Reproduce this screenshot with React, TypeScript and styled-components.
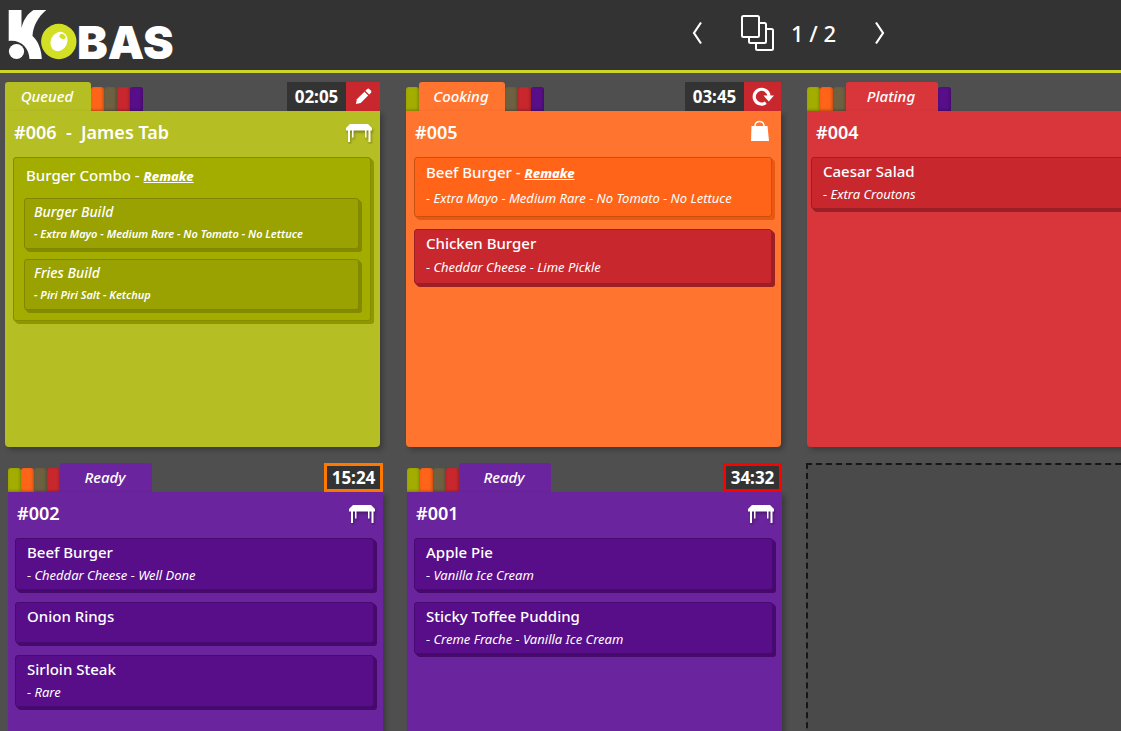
import React from 'react';
import styled, { createGlobalStyle, css } from 'styled-components';

const GlobalStyle = createGlobalStyle`
  *, *::before, *::after { box-sizing: border-box; }
  body { margin: 0; background: #4f4f4f; }
  h2, h3, p, ul { margin: 0; padding: 0; }
  ul { list-style: none; }
  button { font: inherit; color: inherit; border: 0; margin: 0; cursor: pointer; }
`;

type StageId = 'queued' | 'cooking' | 'held' | 'plating' | 'ready';
type Tone = 'green' | 'orange' | 'red' | 'purple';
type Size = 'compact' | 'medium' | 'tall' | 'group';

const stageColours: Record<StageId, string> = {
  queued: '#a3ad00',
  cooking: '#ff6418',
  held: '#6e6141',
  plating: '#c8282d',
  ready: '#570e88',
};

const stageOrder: StageId[] = ['queued', 'cooking', 'held', 'plating', 'ready'];

const cardColours: Record<StageId, string> = {
  queued: '#b5be22',
  cooking: '#ff742e',
  held: '#6e6141',
  plating: '#d9363c',
  ready: '#6a249d',
};

const tones: Record<Tone, { face: string; edge: string; side: string }> = {
  green: { face: '#a3ad00', edge: '#848c00', side: '#8f9700' },
  orange: { face: '#ff6418', edge: '#c9500f', side: '#e85812' },
  red: { face: '#c8282d', edge: '#9c1f25', side: '#9c1f25' },
  purple: { face: '#570e88', edge: '#460a70', side: '#450a6c' },
};

const sizes: Record<Size, { gap: number; padding: string }> = {
  compact: { gap: 3, padding: '3px 11px 4px' },
  medium: { gap: 4, padding: '3px 11px 6px' },
  tall: { gap: 5, padding: '4px 11px 8px' },
  group: { gap: 12, padding: '7px 11px 10px 10px' },
};

interface Part {
  name: string;
  note: string;
}

interface Item {
  name: string;
  note?: string;
  remake?: boolean;
  tone: Tone;
  size?: Size;
  parts?: Part[];
}

interface Order {
  title: string;
  stage: StageId;
  label: string;
  time?: string;
  alert?: string;
  action?: 'edit' | 'redo';
  place?: 'table' | 'bag';
  items: Item[];
}

const topOrders: Order[] = [
  {
    title: '#006  -  James Tab',
    stage: 'queued',
    label: 'Queued',
    time: '02:05',
    action: 'edit',
    place: 'table',
    items: [
      {
        name: 'Burger Combo',
        remake: true,
        tone: 'green',
        size: 'group',
        parts: [
          { name: 'Burger Build', note: '- Extra Mayo - Medium Rare - No Tomato - No Lettuce' },
          { name: 'Fries Build', note: '- Piri Piri Salt - Ketchup' },
        ],
      },
    ],
  },
  {
    title: '#005',
    stage: 'cooking',
    label: 'Cooking',
    time: '03:45',
    action: 'redo',
    place: 'bag',
    items: [
      {
        name: 'Beef Burger',
        remake: true,
        tone: 'orange',
        size: 'tall',
        note: '- Extra Mayo - Medium Rare - No Tomato - No Lettuce',
      },
      { name: 'Chicken Burger', tone: 'red', size: 'medium', note: '- Cheddar Cheese - Lime Pickle' },
    ],
  },
  {
    title: '#004',
    stage: 'plating',
    label: 'Plating',
    items: [{ name: 'Caesar Salad', tone: 'red', note: '- Extra Croutons' }],
  },
];

const bottomOrders: Order[] = [
  {
    title: '#002',
    stage: 'ready',
    label: 'Ready',
    time: '15:24',
    alert: '#ff7800',
    place: 'table',
    items: [
      { name: 'Beef Burger', tone: 'purple', note: '- Cheddar Cheese - Well Done' },
      { name: 'Onion Rings', tone: 'purple' },
      { name: 'Sirloin Steak', tone: 'purple', note: '- Rare' },
    ],
  },
  {
    title: '#001',
    stage: 'ready',
    label: 'Ready',
    time: '34:32',
    alert: '#ff0000',
    place: 'table',
    items: [
      { name: 'Apple Pie', tone: 'purple', note: '- Vanilla Ice Cream' },
      { name: 'Sticky Toffee Pudding', tone: 'purple', note: '- Creme Frache - Vanilla Ice Cream' },
    ],
  },
];

const Screen = styled.div`
  display: flex;
  flex-direction: column;
  height: 100vh;
  overflow: hidden;
  background: #4f4f4f;
  color: #fff;
  font-family: 'Noto Sans', 'Open Sans', sans-serif;
  font-weight: 500;
`;

const Header = styled.header`
  display: grid;
  grid-template-columns: minmax(0, 1fr) 430px;
  align-items: center;
  flex: none;
  height: 73px;
  padding-bottom: 4px;
  background: #333;
  border-bottom: 3px solid #cbd627;
`;

const Brand = styled.a`
  display: flex;
  align-items: flex-start;
  align-self: start;
  height: 60px;
  padding-left: 8px;
  color: #fff;
  text-decoration: none;
`;

const BrandName = styled.span`
  padding-top: 12px;
  font-family: Inter, sans-serif;
  font-weight: 900;
  font-size: 46px;
  line-height: 60px;
`;

const Pager = styled.nav`
  display: flex;
  align-items: center;
`;

const PagerButton = styled.button`
  display: flex;
  padding: 0;
  background: none;
`;

const PageCount = styled.span`
  display: flex;
  align-items: center;
  gap: 16px;
  margin: 0 38px;
  font-size: 22px;
  line-height: 30px;
`;

const Board = styled.main`
  display: flex;
  flex-direction: column;
  flex: 1;
  gap: 16px;
  padding-top: 9px;
  overflow: auto;
  scrollbar-width: none;
`;

const Lane = styled.section<{ $start: number; $gap: number }>`
  display: flex;
  flex: none;
  gap: ${(p) => p.$gap}px;
  padding-left: ${(p) => p.$start}px;
`;

const Ticket = styled.article`
  display: flex;
  flex-direction: column;
  flex: 1 0 375px;
`;

const TicketTop = styled.div`
  display: flex;
  align-items: flex-end;
  justify-content: space-between;
  height: 29px;
`;

const Stages = styled.div`
  display: flex;
  align-items: flex-end;
`;

const StageChip = styled.button<{ $stage: StageId }>`
  width: 13px;
  height: 24px;
  padding: 0;
  border-radius: 3px 3px 0 0;
  background: ${(p) => stageColours[p.$stage]};
  box-shadow: inset -1px -1px 3px rgba(0, 0, 0, 0.25);
`;

const StageTab = styled.button<{ $stage: StageId; $wide: boolean }>`
  width: ${(p) => (p.$wide ? 92 : 86)}px;
  height: 29px;
  padding: 0 2px 2px 0;
  border-radius: 3px 3px 0 0;
  background: ${(p) => cardColours[p.$stage]};
  font-size: 15px;
  font-style: italic;
  line-height: 26px;
`;

const Clock = styled.div`
  display: flex;
  height: 29px;
`;

const Timer = styled.time<{ $alert?: string }>`
  display: flex;
  align-items: center;
  justify-content: center;
  width: 59px;
  background: #333;
  font-size: 17px;
  font-weight: 700;
  ${(p) =>
    p.$alert &&
    css`
      border: 3px solid ${p.$alert};
    `}
`;

const ActionButton = styled.button<{ $wide: boolean }>`
  display: flex;
  align-items: center;
  justify-content: center;
  width: ${(p) => (p.$wide ? 37 : 34)}px;
  padding: 0;
  background: #c8282d;
`;

const TicketBody = styled.div<{ $stage: StageId }>`
  flex: 1;
  min-height: 336px;
  border-radius: 0 0 4px 4px;
  background: ${(p) => cardColours[p.$stage]};
  box-shadow: 3px 3px 5px rgba(0, 0, 0, 0.25);
`;

const TicketHead = styled.div`
  display: flex;
  align-items: center;
  justify-content: space-between;
  height: 46px;
  padding: 0 5px 4px 9px;
`;

const TicketTitle = styled.h2`
  font-size: 18px;
  font-weight: 600;
  line-height: 24px;
  white-space: pre;
`;

const Items = styled.ul<{ $stage: StageId }>`
  display: flex;
  flex-direction: column;
  gap: 12px;
  padding-right: 9px;
  padding-left: ${(p) => ({ queued: 8, cooking: 8, held: 8, plating: 4, ready: 7 })[p.$stage]}px;
`;

const ItemBox = styled.li<{ $tone: Tone; $size: Size }>`
  display: flex;
  flex-direction: column;
  gap: ${(p) => sizes[p.$size].gap}px;
  min-height: 41px;
  padding: ${(p) => sizes[p.$size].padding};
  border: 1px solid ${(p) => tones[p.$tone].edge};
  border-radius: 3px;
  background: ${(p) => tones[p.$tone].face};
  box-shadow:
    1px 1px 0 ${(p) => tones[p.$tone].side},
    2px 2px 0 ${(p) => tones[p.$tone].side},
    3px 3px 0 ${(p) => tones[p.$tone].side};
`;

const ItemName = styled.h3<{ $indent: boolean }>`
  padding-left: ${(p) => (p.$indent ? 2 : 0)}px;
  font-size: 15px;
  font-weight: 500;
  line-height: 20px;
`;

const Remake = styled.em`
  font-size: 13px;
  font-weight: 800;
  text-decoration: underline;
`;

const Note = styled.p`
  font-size: 13px;
  font-style: italic;
  font-weight: 400;
  line-height: 20px;
`;

const Parts = styled.ul`
  display: flex;
  flex-direction: column;
  gap: 10px;
`;

const PartBox = styled.li`
  display: flex;
  flex-direction: column;
  gap: 2px;
  padding: 3px 9px 4px;
  border: 1px solid #7f8700;
  border-radius: 3px;
  background: #99a200;
  box-shadow:
    1px 1px 0 #828a00,
    2px 2px 0 #828a00,
    3px 3px 0 #828a00;
`;

const PartName = styled.h3`
  font-size: 14px;
  font-style: italic;
  font-weight: 500;
  line-height: 20px;
`;

const PartNote = styled.p`
  font-size: 11px;
  font-style: italic;
  font-weight: 600;
  line-height: 20px;
`;

const EmptySlot = styled.div`
  flex: 1 0 375px;
  border: 2px dashed #161616;
  background: #4a4a4a;
`;

const BrandMark = () => (
  <svg width="69" height="60" viewBox="8 0 69 60" aria-hidden="true">
    <path
      fill="#fff"
      d="M8.700 10H21.500V28C23 21 27 14 33.500 10H46.300C38 17 33 26 32.500 36C38 41 41.500 49 41.800 59H29.500C29 48 21 39.500 8.700 41Z"
    />
    <circle cx="16.500" cy="51.500" r="7.600" fill="#fff" />
    <circle cx="58.800" cy="41.500" r="17.700" fill="#d3df24" />
    <ellipse cx="59" cy="41.500" rx="8.200" ry="10" transform="rotate(25 59 41.500)" fill="#fff" />
    <ellipse cx="62.500" cy="36.500" rx="3.200" ry="2.400" transform="rotate(30 62.500 36.500)" fill="#d3df24" />
  </svg>
);

const Arrow = ({ back }: { back?: boolean }) => (
  <svg width="12" height="24" viewBox="0 0 12 24" fill="none" stroke="#fff" strokeWidth="2.200" aria-hidden="true">
    <path d={back ? 'M10 1.500L3 12L10 22.500' : 'M2 1.500L9 12L2 22.500'} />
  </svg>
);

const PagesIcon = () => (
  <svg width="34" height="36" viewBox="0 0 34 36" fill="#333" stroke="#fff" strokeWidth="2" aria-hidden="true">
    <rect x="15" y="14" width="17" height="21" rx="1.500" />
    <rect x="8" y="8" width="17" height="20" rx="1.500" />
    <rect x="1" y="1" width="17" height="21" rx="1.500" />
  </svg>
);

const TableIcon = () => (
  <svg width="30" height="24" viewBox="0 -2 30 24" fill="#fff" role="img" aria-label="Table">
    <g style={{ filter: 'drop-shadow(1px 2px 1px rgba(0,0,0,.3))' }}>
      <path d="M5 2H23L27 6V8.500H1V6Z" />
      <path d="M3 8H5V20H3ZM7 8H8.500V15.500H7ZM20 8H21.500V15.500H20ZM23.500 8H25.500V20H23.500Z" />
    </g>
  </svg>
);

const BagIcon = () => (
  <svg width="30" height="24" viewBox="1 3 30 24" role="img" aria-label="Takeaway">
    <path d="M6.500 9H22.500L24 24H6Z" fill="#fff" />
    <path d="M10 10V9C10 3 19 3 19 9V10" fill="none" stroke="#fff" strokeWidth="1.500" />
  </svg>
);

const PencilIcon = () => (
  <svg width="17" height="17" viewBox="0 0 18 18" fill="#fff" aria-hidden="true">
    <path d="M1 17L2 12L10 4L14 8L6 16Z" />
    <path d="M11 3L13 1Q14 0.300 15 1L17 3Q17.700 4 17 5L15 7Z" />
  </svg>
);

const RedoIcon = () => (
  <svg width="22" height="19" viewBox="0 0 22 19" fill="none" aria-hidden="true">
    <path d="M13.800 15.800A7.400 7.400 0 1 1 17 9" stroke="#fff" strokeWidth="3.200" />
    <path d="M11.500 8.500H22L16.800 14.500Z" fill="#fff" />
  </svg>
);

const TicketCard = ({ order }: { order: Order }) => (
  <Ticket>
    <TicketTop>
      <Stages>
        {stageOrder.map((stage) =>
          stage === order.stage ? (
            <StageTab key={stage} $stage={stage} $wide={stage === 'plating' || stage === 'ready'}>
              {order.label}
            </StageTab>
          ) : (
            <StageChip key={stage} $stage={stage} aria-label={`Move to ${stage}`} />
          ),
        )}
      </Stages>
      {order.time && (
        <Clock>
          <Timer $alert={order.alert}>{order.time}</Timer>
          {order.action && (
            <ActionButton $wide={order.action === 'redo'} aria-label={order.action}>
              {order.action === 'edit' ? <PencilIcon /> : <RedoIcon />}
            </ActionButton>
          )}
        </Clock>
      )}
    </TicketTop>
    <TicketBody $stage={order.stage}>
      <TicketHead>
        <TicketTitle>{order.title}</TicketTitle>
        {order.place === 'table' && <TableIcon />}
        {order.place === 'bag' && <BagIcon />}
      </TicketHead>
      <Items $stage={order.stage}>
        {order.items.map((item) => (
          <ItemBox key={item.name} $tone={item.tone} $size={item.size ?? 'compact'}>
            <ItemName $indent={item.size === 'group'}>
              {item.name}
              {item.remake && (
                <>
                  {' - '}
                  <Remake>Remake</Remake>
                </>
              )}
            </ItemName>
            {item.note && <Note>{item.note}</Note>}
            {item.parts && (
              <Parts>
                {item.parts.map((part) => (
                  <PartBox key={part.name}>
                    <PartName>{part.name}</PartName>
                    <PartNote>{part.note}</PartNote>
                  </PartBox>
                ))}
              </Parts>
            )}
          </ItemBox>
        ))}
      </Items>
    </TicketBody>
  </Ticket>
);

export default function App() {
  return (
    <Screen>
      <GlobalStyle />
      <Header>
        <Brand href="#" aria-label="Kobas">
          <BrandMark />
          <BrandName>BAS</BrandName>
        </Brand>
        <Pager aria-label="Pages">
          <PagerButton aria-label="Previous page">
            <Arrow back />
          </PagerButton>
          <PageCount>
            <PagesIcon />1 / 2
          </PageCount>
          <PagerButton aria-label="Next page">
            <Arrow />
          </PagerButton>
        </Pager>
      </Header>
      <Board>
        <Lane $start={5} $gap={26}>
          {topOrders.map((order) => (
            <TicketCard key={order.title} order={order} />
          ))}
        </Lane>
        <Lane $start={8} $gap={24}>
          {bottomOrders.map((order) => (
            <TicketCard key={order.title} order={order} />
          ))}
          <EmptySlot />
        </Lane>
      </Board>
    </Screen>
  );
}
